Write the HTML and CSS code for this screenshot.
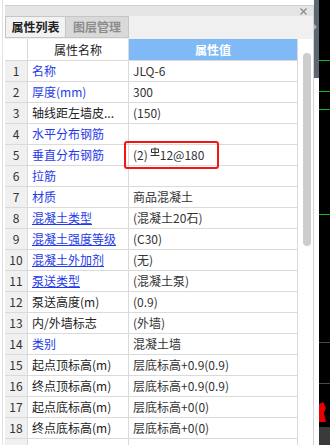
FILE: index.html
```html
<!DOCTYPE html>
<html lang="zh-CN">
<head>
  <meta charset="UTF-8" />
  <meta name="viewport" content="width=device-width, initial-scale=1" />
  <title>属性列表</title>
  <link rel="stylesheet" href="styles.css">
</head>
<body>
  <div class="screen">
    <!-- left edge of the neighbouring pane -->
    <div class="gutter"></div>

    <!-- property panel -->
    <div class="panel">
      <div class="titlebar">
        <svg class="close" width="7" height="7" viewBox="0 0 7 7">
          <path d="M0.5 0.5 L6.5 6.5 M6.5 0.5 L0.5 6.5" stroke="#8a8a8a" stroke-width="1.2" fill="none"/>
        </svg>
      </div>
      <div class="tabs">
        <div class="tab active">属性列表</div>
        <div class="tab">图层管理</div>
      </div>
      <div class="body">
        <div class="grid">
          <div class="cell head num"></div>
          <div class="cell head name-h">属性名称</div>
          <div class="cell head value-h">属性值</div>

          <div class="cell num">1</div><div class="cell name link">名称</div><div class="cell value">JLQ-6</div>
          <div class="cell num">2</div><div class="cell name link">厚度(mm)</div><div class="cell value">300</div>
          <div class="cell num">3</div><div class="cell name">轴线距左墙皮...</div><div class="cell value">(150)</div>
          <div class="cell num">4</div><div class="cell name link">水平分布钢筋</div><div class="cell value"></div>
          <div class="cell num">5</div><div class="cell name link">垂直分布钢筋</div>
          <div class="cell value marked">(2)<svg class="rebar" width="10" height="10" viewBox="0 0 10 10">
              <path d="M5 0.5 V9 M1.5 2 H8.5 V5.5 H1.5 Z M0.5 8.5 H9.5" stroke="#333" stroke-width="1" fill="none"/>
            </svg>12@180<span class="mark"></span></div>
          <div class="cell num">6</div><div class="cell name link">拉筋</div><div class="cell value"></div>
          <div class="cell num">7</div><div class="cell name link">材质</div><div class="cell value">商品混凝土</div>
          <div class="cell num">8</div><div class="cell name link u">混凝土类型</div><div class="cell value">(混凝土20石)</div>
          <div class="cell num">9</div><div class="cell name link u">混凝土强度等级</div><div class="cell value">(C30)</div>
          <div class="cell num">10</div><div class="cell name link u">混凝土外加剂</div><div class="cell value">(无)</div>
          <div class="cell num">11</div><div class="cell name link u">泵送类型</div><div class="cell value">(混凝土泵)</div>
          <div class="cell num">12</div><div class="cell name">泵送高度(m)</div><div class="cell value">(0.9)</div>
          <div class="cell num">13</div><div class="cell name">内/外墙标志</div><div class="cell value">(外墙)</div>
          <div class="cell num">14</div><div class="cell name link">类别</div><div class="cell value">混凝土墙</div>
          <div class="cell num">15</div><div class="cell name">起点顶标高(m)</div><div class="cell value">层底标高+0.9(0.9)</div>
          <div class="cell num">16</div><div class="cell name">终点顶标高(m)</div><div class="cell value">层底标高+0.9(0.9)</div>
          <div class="cell num">17</div><div class="cell name">起点底标高(m)</div><div class="cell value">层底标高+0(0)</div>
          <div class="cell num">18</div><div class="cell name">终点底标高(m)</div><div class="cell value">层底标高+0(0)</div>
          <div class="cell num"></div><div class="cell name"></div><div class="cell value"></div>
        </div>
        <div class="scroll"><div class="thumb"></div></div>
      </div>
    </div>

    <!-- splitter and the drawing area behind -->
    <div class="splitter"><div class="grip"></div></div>
    <div class="canvas">
      <i class="hline green" style="top:60px"></i>
      <i class="hline green" style="top:91px"></i>
      <i class="hline green" style="top:109px"></i>
      <i class="hline green" style="top:214px"></i>
      <i class="hline grey" style="top:342px"></i>
      <i class="hline grey" style="top:383px"></i>
      <i class="blob"></i>
      <i class="floor"></i>
    </div>
  </div>
</body>
</html>
```

FILE: styles.css
```css
html, body { margin: 0; padding: 0; }
body {
  font-family: "Noto Sans CJK SC", "Noto Sans", sans-serif;
  font-size: 12px;
  color: #333;
  background: #fff;
  overflow: hidden;
}
.screen { display: flex; height: 445px; overflow: hidden; }

/* neighbouring pane edge */
.gutter {
  width: 5px;
  flex: none;
  box-sizing: border-box;
  border-left: 2px solid #fff;
  background: linear-gradient(to right, #e2e2e2 0 1px, #fff 1px);
}

/* Panel */
.panel {
  width: 309px;
  flex: none;
  display: flex;
  flex-direction: column;
  margin-top: 5px;
  border-top: 1px solid #cfcfcf;
  border-right: 1px solid #d4d4d4;
  box-sizing: border-box;
}
.titlebar {
  height: 10px;
  background: #e5e5e5;
  display: flex;
  justify-content: flex-end;
  align-items: center;
  padding-right: 6px;
}
.close { display: block; }
.tabs {
  height: 23px;
  background: #f0f0f0;
  display: flex;
  align-items: flex-start;
}
.tab {
  height: 22px;
  line-height: 20px;
  box-sizing: border-box;
  border: 1px solid #c6c6c6;
  background: #d9d9d9;
  color: #8c8c8c;
  font-weight: bold;
  text-align: center;
  width: 64px;
}
.tab.active {
  width: 60px;
  background: #f2f2f2;
  color: #222;
  border-right: none;
}

/* Table */
.body { display: flex; flex: 1; min-height: 0; }
.grid {
  display: grid;
  grid-template-columns: 23px 101px 169px;
  grid-template-rows: 22px;
  grid-auto-rows: 21px;
  align-content: start;
}
.cell {
  box-sizing: border-box;
  border-right: 1px solid #dadada;
  border-bottom: 1px solid #dadada;
  line-height: 20px;
  white-space: nowrap;
  overflow: hidden;
  padding-left: 4px;
}
.cell.num {
  background: #f0f0f0;
  text-align: center;
  padding-left: 0;
  color: #333;
}
.cell.head { line-height: 21px; }
.cell.head.num { background: #fff; }
.name-h { text-align: center; padding-left: 0; color: #222; }
.value-h {
  background: #7fbaf6;
  color: #fff;
  font-weight: bold;
  text-align: center;
  padding-left: 0;
}
.name { color: #222; }
.name.link { color: #1f3ae8; }
.name.u { text-decoration: underline; text-underline-offset: 1px; }
.value { color: #333; }
.value.marked { position: relative; overflow: visible; }
.rebar { vertical-align: 3px; margin: 0 0 0 2px; }
.mark {
  position: absolute;
  left: -5px;
  top: -4px;
  width: 95px;
  height: 28px;
  box-sizing: border-box;
  border: 2px solid #f41414;
  border-radius: 3px;
}

/* Scrollbar */
.scroll { width: 15px; flex: none; background: #fff; }
.thumb {
  width: 8px;
  height: 193px;
  margin: 14px 0 0 5px;
  background: #cdcdcd;
  border-radius: 4px;
}

/* Splitter + canvas */
.splitter {
  width: 5px;
  flex: none;
  background: linear-gradient(#5d6673 0 78px, #fff 78px);
  position: relative;
}
.grip {
  position: absolute;
  left: 0;
  top: 24px;
  width: 0;
  height: 0;
  border-top: 3px solid transparent;
  border-bottom: 3px solid transparent;
  border-left: 3px solid #a9b0b8;
}
.canvas { flex: 1; background: #000; position: relative; }
.hline { position: absolute; left: 0; right: 0; height: 1px; }
.hline.green { background: #0cc30c; }
.hline.grey { background: #4a4a4a; }
.blob {
  position: absolute;
  left: 0;
  top: 402px;
  width: 7px;
  height: 20px;
  background: #e60000;
  clip-path: polygon(0 10%, 60% 0, 100% 30%, 70% 55%, 100% 100%, 0 100%);
}
.floor {
  position: absolute;
  left: 0;
  right: 0;
  top: 427px;
  bottom: 0;
  background: #3a3a3a;
}
```
